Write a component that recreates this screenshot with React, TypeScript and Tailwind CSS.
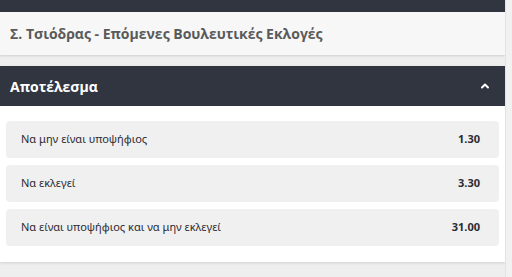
import { ChevronUp } from "lucide-react"

const outcomes = [
  { label: "Να μην είναι υποψήφιος", odds: "1.30" },
  { label: "Να εκλεγεί", odds: "3.30" },
  { label: "Να είναι υποψήφιος και να μην εκλεγεί", odds: "31.00" },
]

export default function App() {
  return (
    <div className="h-[277px] w-[512px] overflow-hidden bg-[#eeeeee] flex">
      <div className="w-[505px] flex flex-col">
        {/* top bar */}
        <div className="h-3 bg-[#31353f]" />

        {/* event title */}
        <div className="h-[43px] bg-[#f7f7f7] shadow-[0_1px_2px_rgba(0,0,0,0.12)] flex items-center px-[10px]">
          <h1 className="text-[14px] font-bold text-[#5a5a5a] font-['Open_Sans',sans-serif]">
            Σ. Τσιόδρας - Επόμενες Βουλευτικές Εκλογές
          </h1>
        </div>

        {/* market */}
        <div className="mt-[11px] bg-white shadow-[0_1px_3px_rgba(0,0,0,0.12)]">
          <div className="h-10 bg-[#31353f] flex items-center justify-between pl-[10px] pr-[14px]">
            <span className="text-[14px] font-bold text-white font-['Open_Sans',sans-serif]">Αποτέλεσμα</span>
            <ChevronUp className="h-3 w-3 text-white" strokeWidth={4} />
          </div>
          <div className="px-[6px] pt-[15px] pb-4 flex flex-col gap-[7px]">
            {outcomes.map((o) => (
              <div
                key={o.label}
                className="h-[37px] rounded bg-[#f0f0f0] flex items-center justify-between pl-[15px] pr-[19px] font-['Noto_Sans',sans-serif] text-[11px] text-[#2b2b33]"
              >
                <span>{o.label}</span>
                <span className="font-bold">{o.odds}</span>
              </div>
            ))}
          </div>
        </div>
      </div>
      <div className="w-[7px] border-l border-[#e2e2e2] bg-[#f1f1f1]" />
    </div>
  )
}
